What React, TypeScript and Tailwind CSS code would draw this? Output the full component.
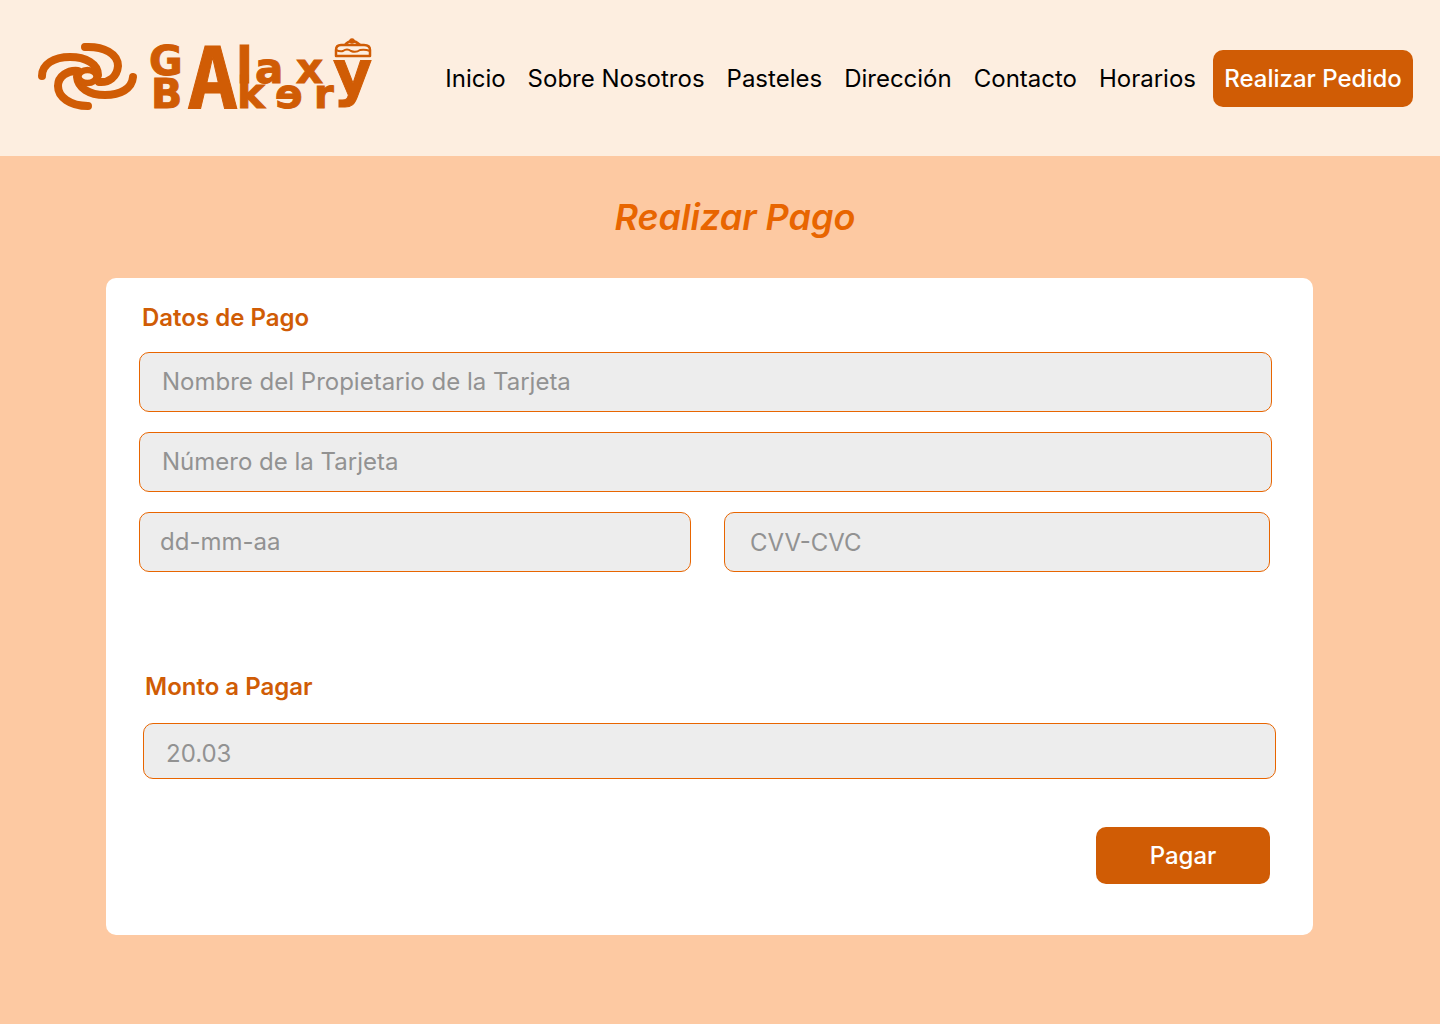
import type { InputHTMLAttributes } from 'react'

const links = ['Inicio', 'Sobre Nosotros', 'Pasteles', 'Dirección', 'Contacto', 'Horarios']

function Logo() {
  return (
    <svg viewBox="0 0 340 76" className="h-[76px] w-[340px] shrink-0 overflow-visible fill-[#d05c05] text-[#d05c05]" role="img" aria-label="Galaxy Bakery">
      <g fill="none" stroke="currentColor" strokeWidth="8" strokeLinecap="round" strokeLinejoin="round">
        <path d="M53 7C72 6 86 14 86 26C85 37 77 43 67 42" />
        <path d="M10 36C10 24 22 17 38 17C54 17 66 24 66 35" />
        <path d="M101 37C100 49 88 55 73 55C57 55 46 48 45 37" />
        <path d="M56 66C38 66 26 57 26 46C26 36 36 30 46 31" />
        <ellipse cx="55.5" cy="36.5" rx="9" ry="6.5" strokeWidth="6.5" />
      </g>
      <g className="font-bold" fontFamily="'DejaVu Sans', sans-serif" stroke="currentColor" strokeWidth="1">
        <text x="117" y="35" fontSize="41">G</text>
        <text x="119" y="68" fontSize="41">B</text>
        <text x="155" y="68" fontSize="85" fontFamily="'DejaVu Sans Mono', monospace">A</text>
        <text x="204" y="43" fontSize="49">l</text>
        <text x="223" y="43" fontSize="42">a</text>
        <text x="264" y="43" fontSize="42">x</text>
        <text x="205" y="68" fontSize="42">k</text>
        <text x="243" y="68" fontSize="41">ɘ</text>
        <text x="282" y="68" fontSize="40">r</text>
        <text x="301" y="54" fontSize="60">y</text>
      </g>
      <g fill="none" stroke="currentColor" strokeWidth="2.5" strokeLinejoin="round">
        <path d="M304 10Q304 5 309 5H332Q338 5 338 10V16H304Z" />
        <path d="M304 10Q308 12 311 11Q315 8 319 11Q324 13 328 10Q333 9 338 11" strokeWidth="2" />
        <path d="M313 5Q316 1 320 1Q324 1 328 5" />
        <circle cx="320" cy="1" r="1.5" />
      </g>
    </svg>
  )
}

function Field({ label, className = 'px-[22px]', ...rest }: InputHTMLAttributes<HTMLInputElement> & { label: string }) {
  return (
    <input
      aria-label={label}
      placeholder={label}
      className={`block w-full min-w-0 rounded-[10px] border border-[#e86500] bg-[#ededed] text-2xl text-black placeholder:text-[#929292] placeholder:opacity-100 ${className}`}
      {...rest}
    />
  )
}

export default function App() {
  return (
    <div className="min-h-screen bg-[#fdc9a2] font-['Inter',sans-serif]">
      <header className="flex h-[156px] items-center justify-between bg-[#fdeee0] pr-[27px] pl-8">
        <a href="#inicio">
          <Logo />
        </a>
        <nav className="flex items-center gap-[22px] text-2xl whitespace-nowrap text-black">
          {links.map((l) => (
            <a key={l} href={'#' + l} className="pt-0.5">
              {l}
            </a>
          ))}
          <button type="button" className="-ml-[5px] h-[57px] w-[200px] rounded-[10px] bg-[#d05c05] pt-0.5 font-medium text-white">
            Realizar Pedido
          </button>
        </nav>
      </header>
      <main className="pt-9 pr-[127px] pb-20 pl-[106px]">
        <h1 className="pl-[51px] text-center text-4xl leading-[50px] font-semibold text-[#e86500] italic">Realizar Pago</h1>
        <form className="mt-9 rounded-[10px] bg-white pt-6 pr-[41px] pb-[51px] pl-[33px]" onSubmit={(e) => e.preventDefault()}>
          <section>
            <h2 className="pl-[3px] text-2xl leading-8 font-semibold text-[#d05c05]">Datos de Pago</h2>
            <div className="mt-[18px] grid gap-5">
              <Field label="Nombre del Propietario de la Tarjeta" className="h-[60px] px-[22px] pb-0.5" />
              <Field label="Número de la Tarjeta" className="h-[60px] px-[22px] pb-0.5" />
              <div className="grid grid-cols-[552fr_546fr] gap-[33px] pr-0.5">
                <Field label="dd-mm-aa" className="h-[60px] px-5 pb-0.5" />
                <Field label="CVV-CVC" className="h-[60px] px-[25px]" />
              </div>
            </div>
          </section>
          <section className="mt-[99px] -mr-1 ml-1">
            <h2 className="pl-[2px] text-2xl leading-8 font-semibold text-[#d05c05]">Monto a Pagar</h2>
            <Field label="20.03" className="mt-5 h-14 px-[22px] pt-1" />
          </section>
          <div className="mt-12 flex justify-end pr-0.5">
            <button type="submit" className="h-[57px] w-[174px] rounded-[10px] bg-[#d05c05] text-2xl font-medium text-white">
              Pagar
            </button>
          </div>
        </form>
      </main>
    </div>
  )
}
